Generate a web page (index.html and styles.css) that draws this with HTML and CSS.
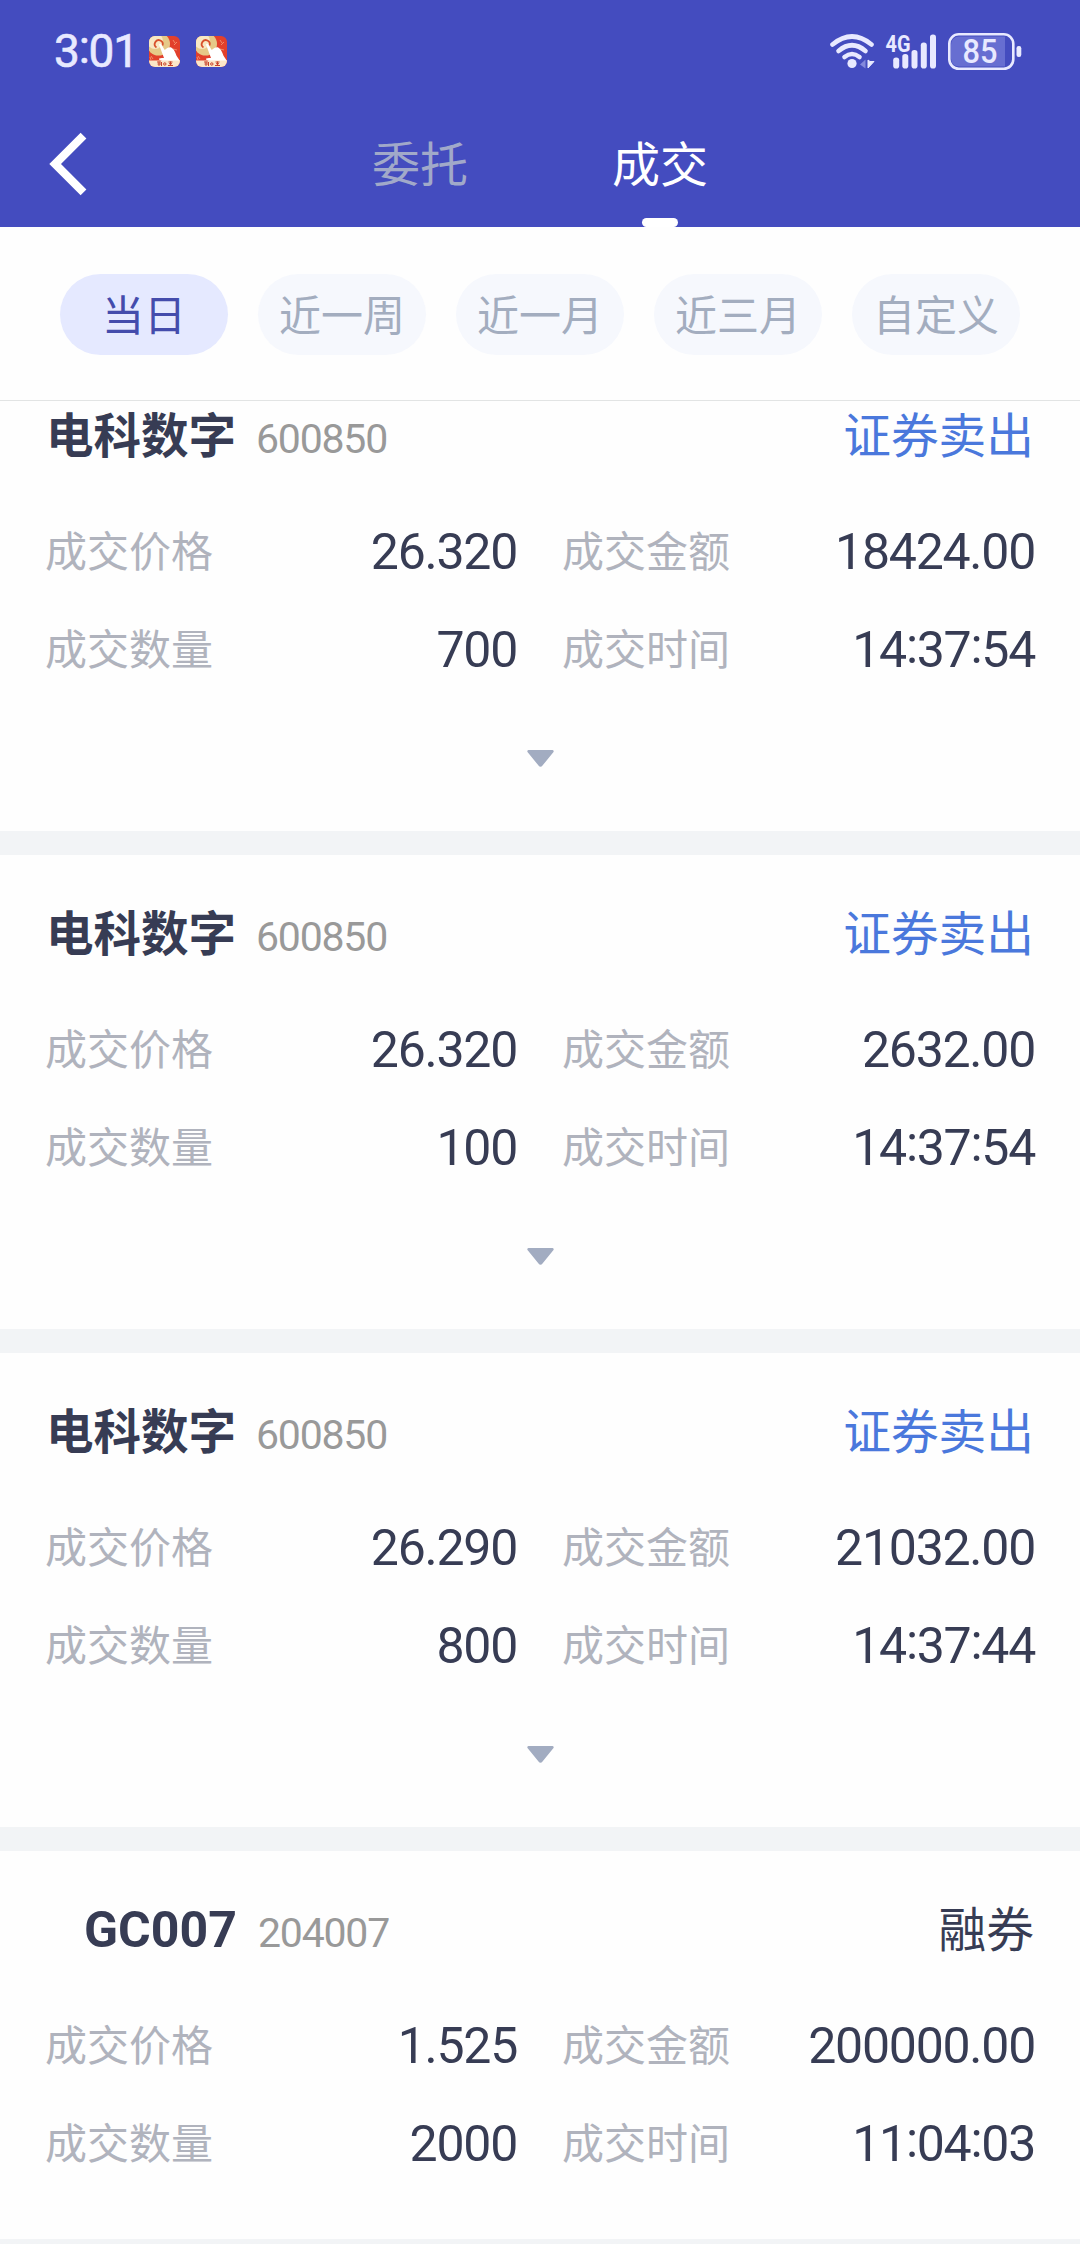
FILE: index.html
```html
<!DOCTYPE html>
<html lang="zh-CN">
<head>
<meta charset="UTF-8">
<title>成交</title>
<link rel="stylesheet" href="styles.css">
</head>
<body>
<svg class="defs" width="0" height="0">
  <symbol id="app" viewBox="0 0 31 31">
    <clipPath id="appclip"><rect width="31" height="31" rx="6"/></clipPath>
    <g clip-path="url(#appclip)">
      <rect width="31" height="31" fill="#e2402c"/>
      <path d="M24 4l2 3M25 9l3-3M24 13l4 1M2 20l2 3M1 21l1 3" stroke="#f08a6a" stroke-width="1"/>
      <circle cx="9.500" cy="8" r="11.500" fill="#e6c988"/>
      <circle cx="6" cy="5" r="8" fill="#f8e8c4"/>
      <path d="M7.500 11.500A4 4 0 1 1 13.500 9.500" fill="none" stroke="#d8502c" stroke-width="1.800"/>
      <path d="M10 8.500c.8-1.200 2.200-.6 2.700.4l3 5c2-1.500 4-3 6.500-2.500 3 1.500 4 5 5.300 8.400L31 25H13l-3-1.500c-.5-1.300 1.500-1.500 5-1.500z" fill="#fff"/>
      <rect y="24.500" width="31" height="6.500" fill="#fbe6c8"/>
      <path d="M8 26h4M10 25.500v4.500M8.500 28h3.500M12.500 26v4M19.500 26h4M21.500 25.500v4.500M19 29.500h5M20 27.700h3" stroke="#c8442c" stroke-width="1"/>
      <circle cx="15.800" cy="28" r="1.200" fill="none" stroke="#c8442c"/>
    </g>
  </symbol>
  <symbol id="caret" viewBox="0 0 27 17">
    <path d="M1.500 0h24a1.300 1.300 0 0 1 1 2L15.300 15.800a2.300 2.300 0 0 1-3.600 0L.5 2a1.300 1.300 0 0 1 1-2z" fill="#a2acc1"/>
  </symbol>
</svg>

<header class="header">
  <div class="status">
    <span class="clock">3<i class="colon">:</i>01</span>
    <svg class="app"><use href="#app"/></svg>
    <svg class="app"><use href="#app"/></svg>
    <svg class="signals" viewBox="828 28 196 44">
      <g fill="none" stroke="#e8e9ff" stroke-width="4.600" stroke-linecap="round">
        <path d="M832.500 43.500Q852 27.500 871.500 43.500"/>
        <path d="M838.500 50Q852 38.500 865.500 50"/>
        <path d="M844.500 56Q852 50 859.500 56"/>
      </g>
      <circle cx="852" cy="62.500" r="4.600" fill="#e8e9ff"/>
      <path d="M860 63.500l5.500-5v9z" fill="#8489dc"/>
      <path d="M868 59v8l6-6.500h-4z" fill="#e8e9ff" stroke="#e8e9ff" stroke-linejoin="round"/>
      <text class="net" x="885.500" y="51" textLength="25" lengthAdjust="spacingAndGlyphs">4G</text>
      <g fill="#e8e9ff">
        <rect x="893.200" y="56.500" width="6" height="11" rx="2.800"/>
        <rect x="902.300" y="53" width="6" height="14.500" rx="2.800"/>
        <rect x="911.500" y="49" width="6" height="18.500" rx="2.800"/>
        <rect x="920.800" y="41.500" width="6" height="26" rx="2.800"/>
        <rect x="930" y="33.500" width="6" height="34" rx="2.800"/>
      </g>
      <path d="M959 35.500h46v30h-46a8 8 0 0 1-8-8v-14a8 8 0 0 1 8-8z" fill="#676ed1"/>
      <rect x="949.300" y="33.300" width="64" height="34.500" rx="9.500" fill="none" stroke="#e8e9ff" stroke-width="2.600"/>
      <rect x="1016.500" y="45" width="4.800" height="11" rx="2.200" fill="#e8e9ff"/>
      <text class="charge" x="962.500" y="62.300" textLength="35" lengthAdjust="spacingAndGlyphs">85</text>
    </svg>
  </div>
  <nav class="nav">
    <svg class="back" viewBox="0 0 40 64"><path d="M35.500 3.700L7.100 32l28.400 28.300" fill="none" stroke="#fff" stroke-width="8.200"/></svg>
    <span class="tab">委托</span>
    <span class="tab active">成交</span>
  </nav>
</header>

<div class="filters">
  <span class="chip active">当日</span>
  <span class="chip">近一周</span>
  <span class="chip">近一月</span>
  <span class="chip">近三月</span>
  <span class="chip">自定义</span>
</div>

<main class="list">
  <article class="card">
    <div class="title"><b class="name">电科数字</b><span class="code">600850</span><span class="side sell">证券卖出</span></div>
    <div class="row"><span class="label">成交价格</span><span class="value">26.320</span><span class="label">成交金额</span><span class="value">18424.00</span></div>
    <div class="row"><span class="label">成交数量</span><span class="value">700</span><span class="label">成交时间</span><span class="value">14<i class="colon">:</i>37<i class="colon">:</i>54</span></div>
    <svg class="caret"><use href="#caret"/></svg>
  </article>
  <article class="card">
    <div class="title"><b class="name">电科数字</b><span class="code">600850</span><span class="side sell">证券卖出</span></div>
    <div class="row"><span class="label">成交价格</span><span class="value">26.320</span><span class="label">成交金额</span><span class="value">2632.00</span></div>
    <div class="row"><span class="label">成交数量</span><span class="value">100</span><span class="label">成交时间</span><span class="value">14<i class="colon">:</i>37<i class="colon">:</i>54</span></div>
    <svg class="caret"><use href="#caret"/></svg>
  </article>
  <article class="card">
    <div class="title"><b class="name">电科数字</b><span class="code">600850</span><span class="side sell">证券卖出</span></div>
    <div class="row"><span class="label">成交价格</span><span class="value">26.290</span><span class="label">成交金额</span><span class="value">21032.00</span></div>
    <div class="row"><span class="label">成交数量</span><span class="value">800</span><span class="label">成交时间</span><span class="value">14<i class="colon">:</i>37<i class="colon">:</i>44</span></div>
    <svg class="caret"><use href="#caret"/></svg>
  </article>
  <article class="card short">
    <div class="title"><b class="name latin">GC007</b><span class="code">204007</span><span class="side">融券</span></div>
    <div class="row"><span class="label">成交价格</span><span class="value">1.525</span><span class="label">成交金额</span><span class="value">200000.00</span></div>
    <div class="row"><span class="label">成交数量</span><span class="value">2000</span><span class="label">成交时间</span><span class="value">11<i class="colon">:</i>04<i class="colon">:</i>03</span></div>
  </article>
</main>
</body>
</html>
```
FILE: styles.css
```css
* { box-sizing: border-box; }
body {
  margin: 0;
  width: 1080px;
  height: 2244px;
  overflow: hidden;
  display: flex;
  flex-direction: column;
  background: #fefefe;
  color: #373c54;
  font-family: "Noto Sans CJK SC", sans-serif;
}
.defs { position: absolute; }
svg { display: block; flex: none; }

.header { flex: none; height: 227px; background: #444cbf; }
.status {
  height: 102px;
  display: flex;
  align-items: center;
  padding: 0 56px 0 54px;
}
.clock {
  width: 95px;
  font: 400 46px/60px Roboto, sans-serif;
  letter-spacing: -1.200px;
  color: #e8e9ff;
  -webkit-text-stroke: 0.600px #e8e9ff;
}
.colon {
  display: inline-block;
  font-style: normal;
  line-height: 1;
  transform: translateY(-4px);
}
.app { width: 31px; height: 31px; margin-right: 16px; }
.signals { width: 196px; height: 44px; margin-left: auto; }
.net { font: 700 23px Roboto, sans-serif; fill: #e8e9ff; }
.charge { font: 500 33px Roboto, sans-serif; fill: #e8e9ff; }

.nav { height: 125px; display: flex; padding-left: 48px; }
.back { width: 40px; height: 64px; margin: 30px 284px 0 0; }
.tab {
  width: 96px;
  margin-right: 144px;
  display: flex;
  flex-direction: column;
  align-items: center;
  font-size: 48px;
  line-height: 118px;
  color: #a1a9c9;
}
.tab.active { color: #fff; }
.tab.active::after {
  content: "";
  width: 36px;
  height: 9px;
  margin-top: -2px;
  border-radius: 5px;
  background: #fff;
}

.filters {
  flex: none;
  height: 174px;
  display: flex;
  gap: 30px;
  padding: 47px 60px 0;
  border-bottom: 1px solid #e2e4e4;
}
.chip {
  width: 168px;
  height: 81px;
  border-radius: 41px;
  background: #f6f8fd;
  color: #a3adbf;
  font-size: 42px;
  line-height: 77px;
  text-align: center;
}
.chip.active { background: #e5e9ff; color: #444cac; }

.list { flex: 1; overflow: hidden; background: #f2f4f6; }
.card {
  height: 474px;
  margin-bottom: 24px;
  padding: 38px 45px 0;
  background: #fefefe;
}
.card:first-child { margin-top: -44px; }
.card.short { height: 388px; }
.title {
  height: 80px;
  display: flex;
  align-items: center;
  padding: 0 1px;
  margin-bottom: 27px;
  line-height: 80px;
}
.name {
  width: 210px;
  padding-bottom: 4px;
  font-size: 47.500px;
  font-weight: 700;
}
.name.latin {
  width: 212px;
  padding: 2px 0 0 38px;
  font: 700 50px/80px Roboto, sans-serif;
}
.code {
  font: 400 41px/80px Roboto, sans-serif;
  letter-spacing: -1.200px;
  color: #999;
  padding-top: 7px;
}
.side { margin-left: auto; padding-bottom: 5px; font-size: 47.700px; }
.sell { color: #4a78dc; }
.row {
  height: 98px;
  display: grid;
  grid-template-columns: 168px 304px 168px 1fr;
  align-items: center;
}
.label { font-size: 42px; line-height: 94px; height: 98px; color: #b0b3bd; }
.label:nth-child(3) { margin-left: 45px; white-space: nowrap; }
.value {
  height: 98px;
  font: 400 50px/101px Roboto, sans-serif;
  letter-spacing: -1.250px;
  text-align: right;
}
.caret { width: 27px; height: 17px; margin: 52px auto 0; }
```
